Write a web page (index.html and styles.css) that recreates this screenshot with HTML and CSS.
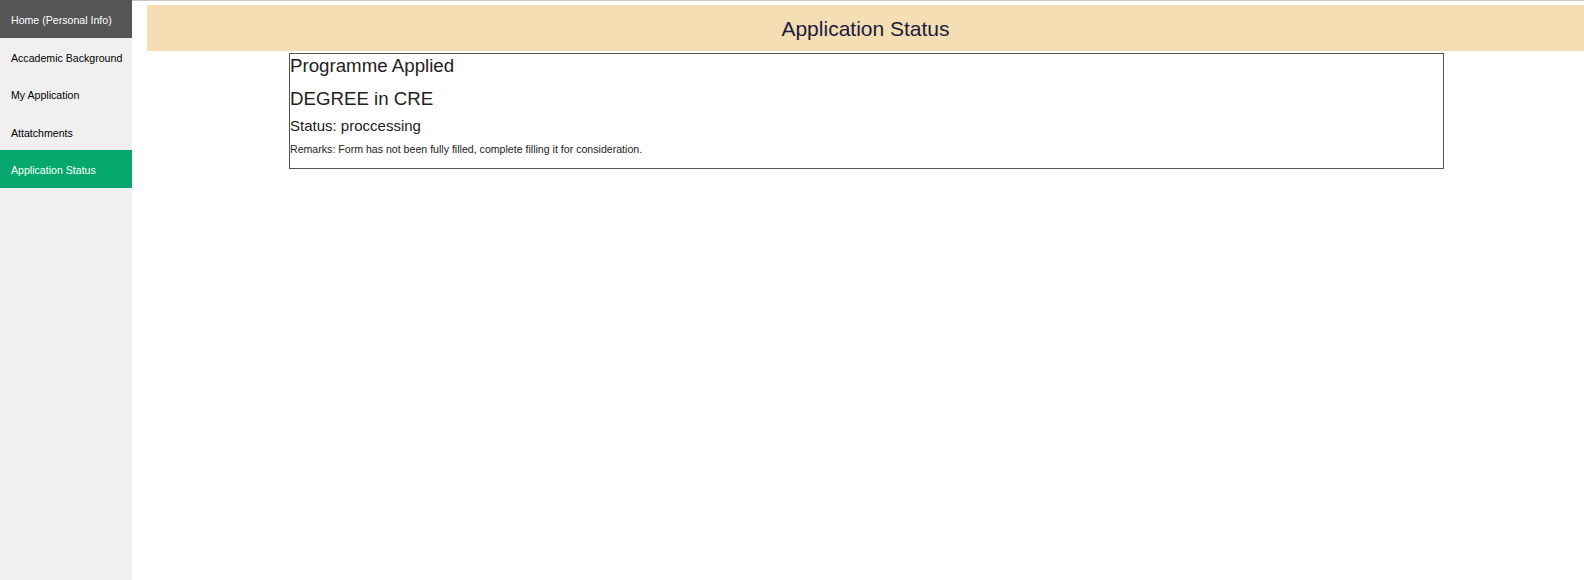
FILE: index.html
```html
<!DOCTYPE html>
<html lang="en">
<head>
<meta charset="utf-8">
<title>Application Status</title>
<link rel="stylesheet" href="styles.css">
</head>
<body>
<div class="layout">
  <nav class="sidebar">
    <a class="nav-item nav-home" href="#">Home (Personal Info)</a>
    <a class="nav-item" href="#">Accademic Background</a>
    <a class="nav-item" href="#">My Application</a>
    <a class="nav-item" href="#">Attatchments</a>
    <a class="nav-item nav-active" href="#">Application Status</a>
  </nav>
  <main class="main">
    <header class="page-header">Application Status</header>
    <section class="status-box">
      <h3 class="prog-label">Programme Applied</h3>
      <h3 class="prog-name">DEGREE in CRE</h3>
      <p class="status">Status: proccessing</p>
      <p class="remarks">Remarks: Form has not been fully filled, complete filling it for consideration.</p>
    </section>
  </main>
</div>
</body>
</html>
```
FILE: styles.css
```css
html, body {
  margin: 0;
  padding: 0;
  height: 100%;
}
body {
  font-family: "Liberation Sans", Arial, sans-serif;
  background: #fff;
  color: #222;
}
.layout {
  display: flex;
  min-height: 100vh;
}
.sidebar {
  width: 132px;
  flex: 0 0 132px;
  background: #f0f0f0;
  display: flex;
  flex-direction: column;
}
.nav-item {
  display: block;
  font-size: 10.6px;
  line-height: 16px;
  padding: 12px 8px 9.5px 11px;
  color: #000;
  text-decoration: none;
  white-space: nowrap;
}
.nav-home {
  background: #555555;
  color: #fff;
}
.nav-active {
  background: #04a86c;
  color: #fff;
}
.main {
  flex: 1;
  border-top: 1px solid #c8c8c8;
  padding: 4px 0 0 15px;
}
.page-header {
  background: #f5deb3;
  height: 46px;
  line-height: 46px;
  padding-top: 1px;
  box-sizing: border-box;
  text-align: center;
  font-size: 21px;
  color: #1c1c3c;
}
.status-box {
  margin: 2px 140px 0 142px;
  border: 1px solid #555;
  padding: 0 0 12px 0;
}
.prog-label,
.prog-name {
  margin: 0;
  font-size: 18.7px;
  font-weight: normal;
  line-height: 23px;
}
.prog-name {
  margin-top: 10px;
}
.status {
  margin: 7px 0 0;
  font-size: 15px;
  line-height: 18px;
}
.remarks {
  margin: 8px 0 0;
  font-size: 10.6px;
  line-height: 13px;
}
```
